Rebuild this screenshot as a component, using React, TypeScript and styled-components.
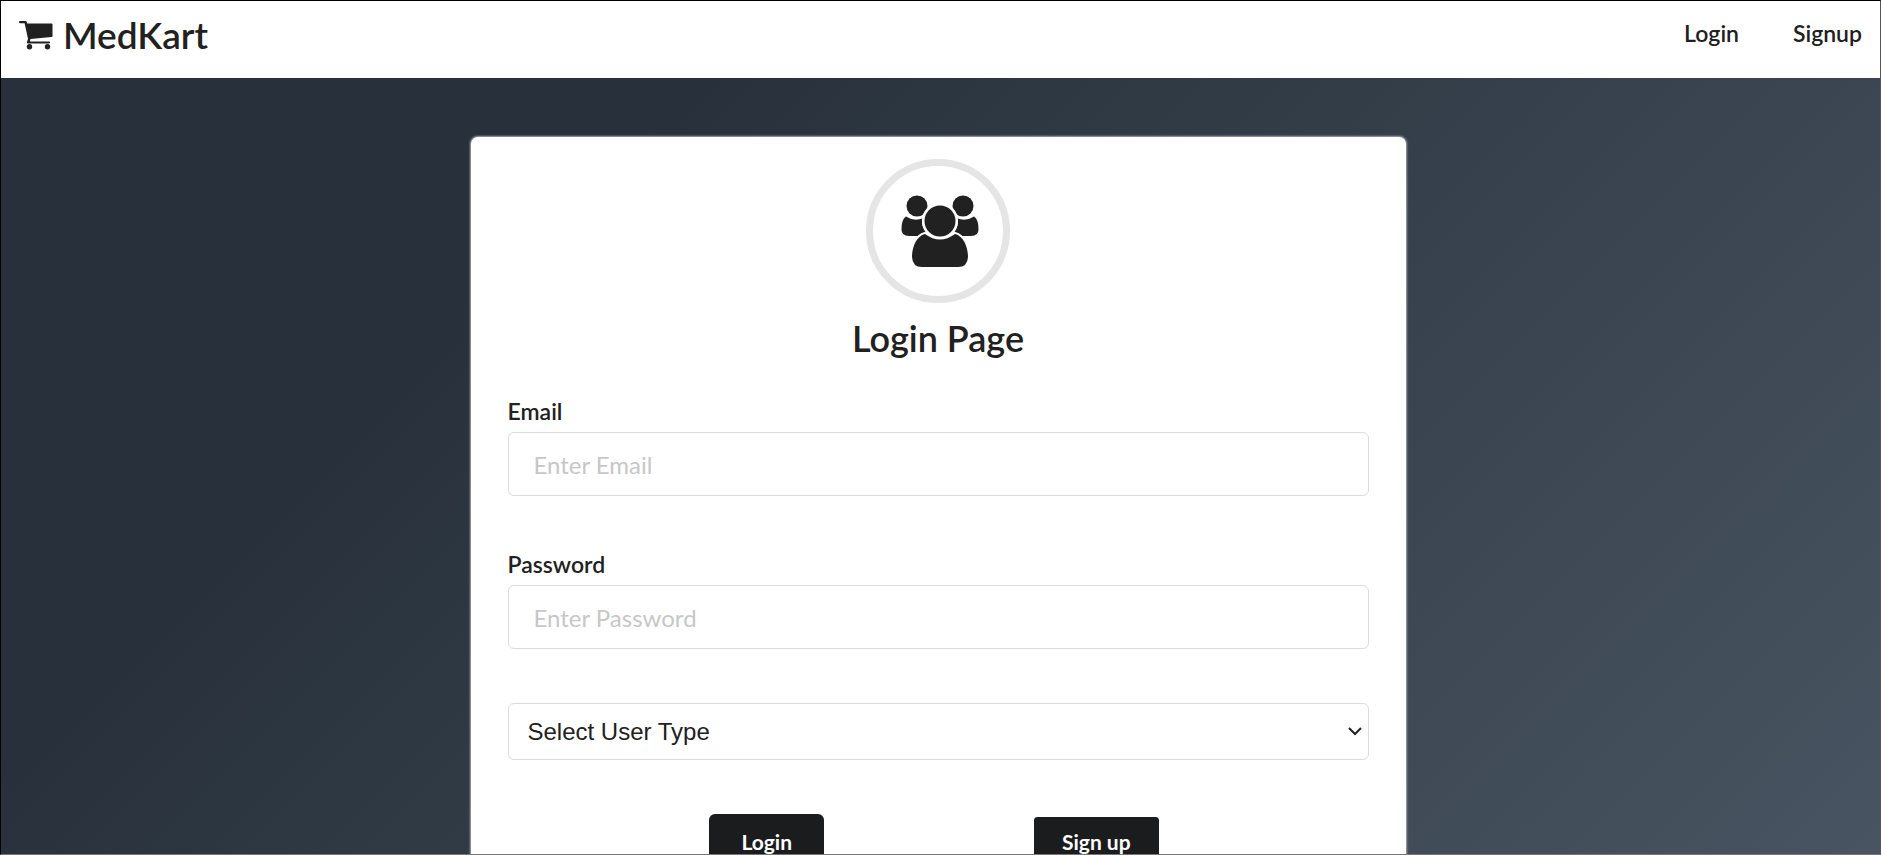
import React from 'react';
import styled, { createGlobalStyle } from 'styled-components';

const GlobalStyle = createGlobalStyle`
  *, *::before, *::after { box-sizing: border-box; }
  body {
    margin: 0;
    color: #212121;
    font-family: Lato, 'Liberation Sans', sans-serif;
  }
`;

const Frame = styled.div`
  display: flex;
  flex-direction: column;
  height: 100vh;
  border: 1px solid #000;
  border-right-color: #555;
  border-bottom-color: #777;
`;

const Header = styled.header`
  display: flex;
  justify-content: space-between;
  align-items: flex-start;
  flex: none;
  padding: 11px 18px 21px;
  background: #fff;
`;

const Brand = styled.a`
  display: flex;
  align-items: center;
  gap: 10px;
  color: #212121;
  font-size: 37px;
  font-weight: 600;
  line-height: 45px;
  text-decoration: none;
`;

const CartIcon = styled.svg`
  width: 34px;
  height: 30px;
  fill: #212121;
`;

const Nav = styled.nav`
  display: flex;
  gap: 54px;
  padding-top: 7px;
`;

const NavLink = styled.a`
  color: #212121;
  font-size: 23px;
  font-weight: 600;
  line-height: 28px;
  text-decoration: none;
`;

const Main = styled.main`
  flex: 1;
  min-height: 0;
  overflow-y: auto;
  scrollbar-width: none;
  padding: 59px 7px 58px 2px;
  background: linear-gradient(315deg, #485461 0%, #28313b 74%);
`;

const Card = styled.form`
  display: flex;
  flex-direction: column;
  width: 50%;
  min-width: 560px;
  margin: 0 auto;
  padding: 22px 37px 48px;
  border-radius: 7px;
  background: #fff;
  box-shadow: 0 0 2px 1px #aaa;
`;

const Avatar = styled.div`
  display: flex;
  justify-content: center;
  align-items: center;
  align-self: center;
  width: 144px;
  height: 144px;
  padding-left: 4px;
  border: 7px solid #e5e5e5;
  border-radius: 50%;
`;

const UsersIcon = styled.svg`
  width: 80px;
  height: 74px;
  fill: #212121;
`;

const Title = styled.h1`
  margin: 12px 0 36px;
  font-size: 36px;
  font-weight: 600;
  line-height: 46px;
  text-align: center;
`;

const Field = styled.div`
  display: flex;
  flex-direction: column;
  gap: 7px;
  margin-bottom: 54px;
`;

const Label = styled.label`
  font-size: 23px;
  font-weight: 600;
  line-height: 28px;
`;

const Input = styled.input`
  height: 64px;
  padding: 0 25px;
  border: 1px solid #dcdcdd;
  border-radius: 6px;
  background: #fff;
  color: #212121;
  font-family: inherit;
  font-size: 24px;
  &::placeholder { color: #c7c7c7; opacity: 1; }
`;

const SelectBox = styled.div`
  display: grid;
  align-items: center;
  margin-bottom: 54px;
  > * { grid-area: 1 / 1; }
`;

const Select = styled.select`
  appearance: none;
  width: 100%;
  height: 57px;
  padding: 0 19px;
  border: 1px solid #dcdcdd;
  border-radius: 6px;
  background: #fff;
  color: #212121;
  font-family: 'Liberation Sans', Arial, sans-serif;
  font-size: 24px;
`;

const Chevron = styled.svg`
  justify-self: end;
  width: 14px;
  height: 9px;
  margin-right: 7px;
  fill: none;
  stroke: #212121;
  stroke-width: 2;
  pointer-events: none;
`;

const Actions = styled.div`
  display: grid;
  grid-template-columns: auto auto;
  justify-content: center;
  align-items: center;
  gap: 210px;
  padding-right: 8px;
`;

const Button = styled.button<{ $outlined?: boolean }>`
  padding: ${(p) => (p.$outlined ? '14px 28px' : '17px 32px')};
  border: 0;
  border-radius: ${(p) => (p.$outlined ? '3px' : '6px')};
  outline: ${(p) => (p.$outlined ? '3px solid #fff' : 'none')};
  background: #1b1c1d;
  color: #fff;
  font-family: inherit;
  font-size: 21px;
  font-weight: 700;
  line-height: 22px;
`;

export default function App() {
  return (
    <>
      <GlobalStyle />
      <Frame>
        <Header>
          <Brand href="#">
            <CartIcon viewBox="0 0 34 30" aria-hidden="true">
              <path d="M1 1h5.500q1 0 1.300 1l.4 1.500H32.500q1 0 1 1v11.500q0 1-1 1.100L11.500 19l-.6 2.600H30q1 0 1 1t-1 1H9q-1.400-.3-1-1.600l1-3.200L5.600 3.200H1q-1-.2-1-1.100T1 1z" />
              <circle cx="10.500" cy="26.800" r="2.700" />
              <circle cx="28.500" cy="26.800" r="2.700" />
            </CartIcon>
            MedKart
          </Brand>
          <Nav>
            <NavLink href="#login">Login</NavLink>
            <NavLink href="#signup">Signup</NavLink>
          </Nav>
        </Header>
        <Main>
          <Card onSubmit={(e) => e.preventDefault()}>
            <Avatar>
              <UsersIcon viewBox="0 0 80 74" aria-hidden="true">
                <circle cx="17" cy="12" r="10.500" />
                <circle cx="63" cy="12" r="10.500" />
                <path d="M6 22.500Q16 29 26 22.500L28 42H9Q1.500 42 1.500 35.500 1.500 25 6 22.500z" />
                <path d="M74 22.500Q64 29 54 22.500L52 42H71Q78.500 42 78.500 35.500 78.500 25 74 22.500z" />
                <circle cx="40" cy="27" r="18" fill="#fff" />
                <path
                  d="M25 40Q40 51 55 40C63.500 42 68 53 68 63Q67.500 73 58 73H22Q12.500 73 12 63C12 53 16.500 42 25 40z"
                  stroke="#fff"
                  strokeWidth="4"
                  paintOrder="stroke"
                />
                <circle cx="40" cy="27" r="18" fill="#fff" />
                <circle cx="40" cy="27" r="15.500" />
              </UsersIcon>
            </Avatar>
            <Title>Login Page</Title>
            <Field>
              <Label htmlFor="email">Email</Label>
              <Input id="email" type="email" placeholder="Enter Email" />
            </Field>
            <Field>
              <Label htmlFor="password">Password</Label>
              <Input id="password" type="password" placeholder="Enter Password" />
            </Field>
            <SelectBox>
              <Select aria-label="User type" defaultValue="">
                <option value="">Select User Type</option>
              </Select>
              <Chevron viewBox="0 0 14 9" aria-hidden="true">
                <path d="M1 1l6 6 6-6" />
              </Chevron>
            </SelectBox>
            <Actions>
              <Button type="submit">Login</Button>
              <Button type="button" $outlined>Sign up</Button>
            </Actions>
          </Card>
        </Main>
      </Frame>
    </>
  );
}
